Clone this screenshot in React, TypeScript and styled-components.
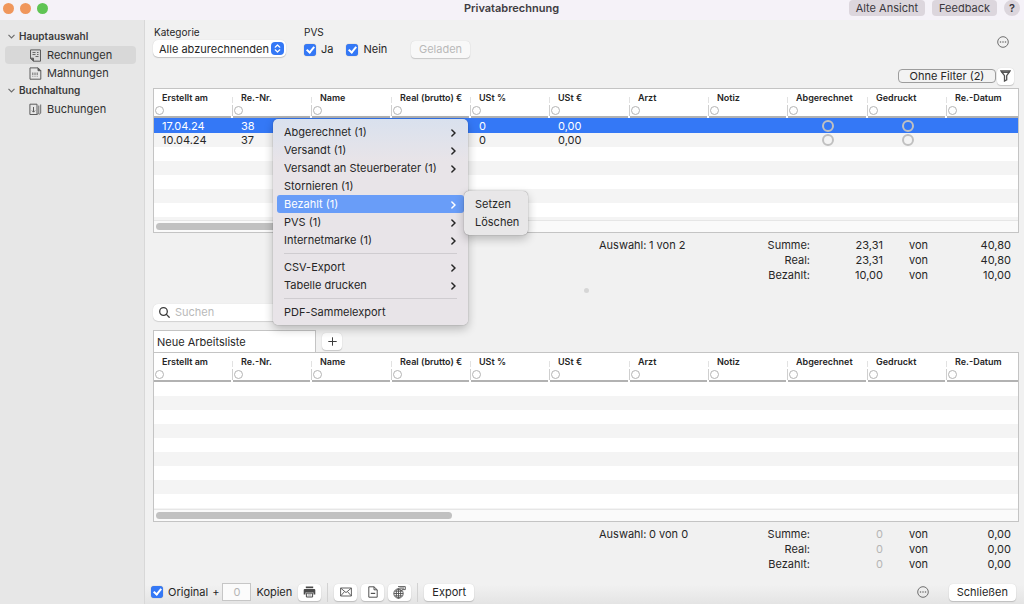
import React from "react";
import styled, { createGlobalStyle, css } from "styled-components";

const GlobalStyle = createGlobalStyle`
  *, *::before, *::after { box-sizing: border-box; }
  body {
    margin: 0;
    font-family: Inter, "Liberation Sans", sans-serif;
    font-size: 11px;
    line-height: 15px;
    color: #262626;
    background: #f1f1f1;
  }
  button, input, select { font: inherit; color: inherit; }
`;

const Window = styled.div`
  position: relative;
  display: flex;
  flex-direction: column;
  min-height: 100vh;
`;

/* ---------- title bar ---------- */

const TitleBar = styled.header`
  display: grid;
  grid-template-columns: 1fr auto 1fr;
  align-items: start;
  height: 20px;
  padding: 0 4px 0 3px;
  background: #f5f2f8;
`;

const Lights = styled.div`
  display: flex;
  gap: 6px;
  padding-top: 3px;
`;

const Light = styled.span<{ $color: string }>`
  width: 11px;
  height: 11px;
  border-radius: 50%;
  background: ${(p) => p.$color};
`;

const Title = styled.h1`
  margin: 0;
  font-size: 11px;
  line-height: 16px;
  font-weight: 600;
  color: #3f3c42;
`;

const TitleActions = styled.div`
  display: flex;
  justify-content: flex-end;
  gap: 7px;
`;

const TitleButton = styled.button<{ $round?: boolean }>`
  height: 16px;
  padding: 0 7px;
  border: 0;
  border-radius: 4px;
  background: #dcd6dd;
  line-height: 16px;
  color: #3b383d;
  ${(p) =>
    p.$round &&
    css`
      width: 16px;
      padding: 0;
      border-radius: 50%;
      font-weight: 600;
    `}
`;

const Body = styled.div`
  display: flex;
  flex: 1;
`;

/* ---------- sidebar ---------- */

const Sidebar = styled.nav`
  flex: 0 0 145px;
  padding: 8px 8px 0 5px;
  border-right: 1px solid #d8d8d8;
  background: #e7e7e7;
`;

const GroupTitle = styled.h2`
  display: flex;
  align-items: center;
  gap: 4px;
  height: 18px;
  margin: 0;
  padding: 0 0 2px 3px;
  font-size: 10px;
  font-weight: 600;
  color: #3a3a3a;
`;

const GroupList = styled.ul`
  margin: 0;
  padding: 0;
  list-style: none;
`;

const SideLink = styled.a<{ $active?: boolean }>`
  display: flex;
  align-items: center;
  gap: 5px;
  height: 18px;
  padding-left: 24px;
  border-radius: 4px;
  background: ${(p) => (p.$active ? "#d8d8d8" : "transparent")};
  color: #303030;
  text-decoration: none;
`;

/* ---------- main area ---------- */

const Main = styled.main`
  display: flex;
  flex: 1;
  flex-direction: column;
  min-width: 0;
`;

const Content = styled.div`
  display: flex;
  flex: 1;
  flex-direction: column;
  padding: 5px 5px 0 8px;
`;

const Toolbar = styled.div`
  display: flex;
  align-items: flex-start;
  height: 44px;
`;

const Field = styled.div`
  display: flex;
  flex-direction: column;
  margin-right: 18px;
`;

const FieldLabel = styled.label`
  padding-left: 1px;
  font-size: 10px;
  line-height: 15px;
`;

const SelectWrap = styled.div`
  position: relative;
  width: 133px;
  height: 17px;
`;

const Select = styled.select`
  appearance: none;
  width: 100%;
  height: 17px;
  padding: 0 14px 0 6px;
  border: 0;
  border-radius: 5px;
  background: #fff;
  box-shadow: 0 1px 1px rgba(0, 0, 0, 0.18), 0 0 1px rgba(0, 0, 0, 0.15);
  line-height: 16px;
`;

const SelectKnob = styled.span`
  position: absolute;
  top: 2px;
  right: 2px;
  display: flex;
  align-items: center;
  justify-content: center;
  width: 13px;
  height: 13px;
  border-radius: 4px;
  background: #3478f6;
  pointer-events: none;
`;

const CheckRow = styled.fieldset`
  display: flex;
  flex-wrap: wrap;
  gap: 3px 13px;
  width: 96px;
  margin: 0;
  padding: 0;
  border: 0;
`;

const CheckLegend = styled.legend`
  padding: 0 0 2px;
  font-size: 10px;
  line-height: 15px;
`;

const CheckLabel = styled.label`
  display: flex;
  align-items: center;
  gap: 5px;
`;

const Check = styled.input`
  appearance: none;
  display: flex;
  align-items: center;
  justify-content: center;
  flex: none;
  width: 12px;
  height: 12px;
  margin: 0;
  border-radius: 3px;
  background: #fff;
  box-shadow: 0 0 1px rgba(0, 0, 0, 0.4);
  &:checked { background: #3478f6; }
  &:checked::after {
    content: "";
    width: 5px;
    height: 8px;
    margin-bottom: 2px;
    border: solid #fff;
    border-width: 0 2px 2px 0;
    transform: rotate(40deg);
  }
`;

const PushButton = styled.button`
  display: flex;
  align-items: center;
  justify-content: center;
  height: 17px;
  min-width: 23px;
  padding: 0 8px;
  border: 0;
  border-radius: 4px;
  background: #fff;
  box-shadow: 0 1px 1px rgba(0, 0, 0, 0.16), 0 0 1px rgba(0, 0, 0, 0.16);
  line-height: 17px;
  &:disabled { background: #f8f8f8; color: #b9b9b9; }
`;

const IconPush = styled(PushButton)<{ $w?: number }>`
  width: ${(p) => p.$w ?? 23}px;
  min-width: 0;
  padding: 0;
`;

const LoadedSlot = styled.div`
  padding: 16px 0 0 11px;
`;

const MoreButton = styled.button<{ $top?: boolean }>`
  display: flex;
  margin: ${(p) => (p.$top ? "11px 10px 0 auto" : "0 20px 0 auto")};
  padding: 0;
  border: 0;
  background: none;
`;

const FilterBar = styled.div`
  display: flex;
  align-items: center;
  justify-content: flex-end;
  gap: 1px;
  height: 20px;
  padding: 0 5px 4px 0;
  margin-top: -1px;
`;

const FilterButton = styled.button`
  width: 98px;
  height: 14px;
  padding: 0;
  border: 1px solid #9d9d9d;
  border-radius: 4px;
  background: #f3f3f3;
  line-height: 12px;
`;

/* ---------- tables ---------- */

const TableFrame = styled.section<{ $grow?: boolean }>`
  display: flex;
  flex-direction: column;
  flex: ${(p) => (p.$grow ? "1 0 auto" : "none")};
  border: 1px solid #c4c4c4;
  background: #fff;
`;

const Grid = styled.table`
  width: 100%;
  table-layout: fixed;
  border-collapse: collapse;
`;

const HeadCell = styled.th`
  height: 29px;
  padding: 0;
  text-align: left;
  vertical-align: top;
`;

const HeadInner = styled.div<{ $last: boolean }>`
  display: flex;
  flex-direction: column;
  height: 29px;
  background: linear-gradient(#b2b2b2, #b2b2b2) left bottom /
    ${(p) => (p.$last ? "100%" : "calc(100% - 2px)")} 2px no-repeat;
`;

const HeadTitle = styled.span<{ $last: boolean }>`
  height: 16px;
  padding: 2px 0 0 8px;
  font-size: 9px;
  line-height: 14px;
  font-weight: 600;
  white-space: nowrap;
  color: #262626;
  background: ${(p) =>
    p.$last ? "none" : "linear-gradient(#e2e2e2, #e2e2e2) right 8px / 1px 6px no-repeat"};
`;

const HeadFilter = styled.span<{ $last: boolean }>`
  display: flex;
  align-items: center;
  height: 11px;
  border-right: 1px solid ${(p) => (p.$last ? "transparent" : "#cfcfcf")};
`;

const FilterDot = styled.button`
  width: 9px;
  height: 9px;
  margin-left: 1px;
  padding: 0;
  border: 1px solid #b4b4b4;
  border-radius: 50%;
  background: #fff;
`;

const Row = styled.tr<{ $selected?: boolean }>`
  height: ${(p) => (p.$selected ? 15 : 14)}px;
  background: ${(p) => (p.$selected ? "#3478f6" : "#f4f4f4")};
  color: ${(p) => (p.$selected ? "#fff" : "#262626")};
`;

const Cell = styled.td<{ $center?: boolean }>`
  padding: 0 0 0 8px;
  line-height: 14px;
  ${(p) =>
    p.$center &&
    css`
      padding: 0;
    `}
`;

const StateDot = styled.input`
  appearance: none;
  display: block;
  width: 12px;
  height: 12px;
  margin: 0 auto;
  border: 2px solid #c0c0c0;
  border-radius: 50%;
`;

const Stripes = styled.div<{ $grow?: boolean }>`
  flex: ${(p) => (p.$grow ? "1 0 112px" : "0 0 73px")};
  background: repeating-linear-gradient(#fff 0 14px, #f4f4f4 14px 28px);
`;

const ScrollTrack = styled.div`
  height: 12px;
  padding: 2px;
  border-top: 1px solid #e6e6e6;
  background: #fafafa;
`;

const ScrollThumb = styled.div`
  width: 34%;
  min-width: 296px;
  height: 7px;
  border-radius: 4px;
  background: #c1c1c1;
`;

const Sums = styled.div`
  display: grid;
  grid-template-columns: 50px 61px 100px 73px 45px 83px;
  grid-auto-rows: 15px;
  justify-content: end;
  padding: 5px 8px 0 0;
`;

const Sum = styled.span<{ $col: number; $muted?: boolean }>`
  grid-column: ${(p) => p.$col};
  text-align: right;
  color: ${(p) => (p.$muted ? "#b5b5b5" : "inherit")};
`;

const SumStart = styled(Sum)`
  text-align: left;
  white-space: nowrap;
`;

const Splitter = styled.div`
  display: flex;
  justify-content: center;
  padding: 5px 0 11px;
`;

const SplitDot = styled.span`
  width: 5px;
  height: 5px;
  border-radius: 50%;
  background: #d6d6d6;
`;

const SearchBox = styled.label`
  display: flex;
  align-items: center;
  gap: 5px;
  width: 250px;
  height: 17px;
  padding-left: 6px;
  border-radius: 5px;
  background: #fff;
  box-shadow: 0 1px 1px rgba(0, 0, 0, 0.12), 0 0 1px rgba(0, 0, 0, 0.15);
`;

const SearchInput = styled.input`
  flex: 1;
  min-width: 0;
  height: 15px;
  padding: 0;
  border: 0;
  outline: 0;
  background: none;
  &::placeholder { color: #b9b9b9; opacity: 1; }
`;

const Tabs = styled.div`
  display: flex;
  align-items: center;
  gap: 6px;
  margin-top: 9px;
`;

const Tab = styled.button`
  width: 163px;
  height: 22px;
  padding: 2px 0 0 3px;
  border: 1px solid #c4c4c4;
  border-bottom: 0;
  background: #fff;
  text-align: left;
`;

/* ---------- bottom bar ---------- */

const BottomBar = styled.footer`
  display: flex;
  align-items: center;
  height: 32px;
  padding: 8px 8px 0 6px;
  background: linear-gradient(#f1f1f1 40%, #e4e4e4);
`;

const Copies = styled.input`
  width: 29px;
  height: 18px;
  margin: 0 5px 0 3px;
  padding: 0;
  border: 1px solid #c6c6c6;
  background: #fbfbfb;
  text-align: center;
  color: #b5b5b5;
`;

const Plus = styled.span`
  margin-left: 4px;
`;

const ButtonGroup = styled.div`
  display: flex;
  gap: 4px;
  margin-left: 6px;
`;

const Divider = styled.span`
  width: 1px;
  height: 19px;
  margin-left: 6px;
  background: #d2d2d2;
`;

/* ---------- context menu ---------- */

const MenuPanel = styled.ul<{ $sub?: boolean }>`
  position: absolute;
  top: ${(p) => (p.$sub ? 191 : 119)}px;
  left: ${(p) => (p.$sub ? 464 : 273)}px;
  width: ${(p) => (p.$sub ? 64 : 195)}px;
  margin: 0;
  padding: 4px;
  border-radius: 5px;
  list-style: none;
  background: ${(p) => (p.$sub ? "#e8e7e8" : "linear-gradient(#d9e1ee, #e3e3ea 28px, #e8e4e8 42px)")};
  box-shadow: 0 0 1px rgba(0, 0, 0, 0.5), 0 4px 10px rgba(0, 0, 0, 0.24);
`;

const MenuButton = styled.button<{ $active?: boolean }>`
  display: flex;
  align-items: center;
  justify-content: space-between;
  width: 100%;
  height: 18px;
  padding: 1px 8px 0 7px;
  border: 0;
  border-radius: 3px;
  background: ${(p) => (p.$active ? "#699df8" : "transparent")};
  color: ${(p) => (p.$active ? "#fff" : "#262626")};
  white-space: nowrap;
`;

const MenuRule = styled.li`
  height: 1px;
  margin: 4px 7px;
  background: #cfccd0;
`;

/* ---------- icons ---------- */

const ChevronDown = () => (
  <svg width="7" height="5" viewBox="0 0 7 5" fill="none" stroke="#6b6b6b" strokeWidth="1.1">
    <path d="M.5 .8 3.5 4 6.500 .8" />
  </svg>
);

const ChevronRight = () => (
  <svg width="5" height="8" viewBox="0 0 5 8" fill="none" stroke="currentColor" strokeWidth="1.5" strokeLinecap="round" strokeLinejoin="round">
    <path d="M.9 1 4 4 .9 7" />
  </svg>
);

const InvoiceIcon = () => (
  <svg width="13" height="13" viewBox="0 0 13 13" fill="none" stroke="#5c5c5c">
    <path d="M1.500 9V.9H11.500V12.200H4.500" />
    <path d="M4.500 12.200 1.200 9.200H4.500Z" fill="#5c5c5c" />
    <path d="M3.500 3.500H6.500M8 3.500H9.500M3.500 5.500H6.500M8 5.500H9.500M6.500 7.500H9.500" strokeWidth=".9" />
  </svg>
);

const ReminderIcon = () => (
  <svg width="13" height="13" viewBox="0 0 13 13" fill="none" stroke="#5c5c5c">
    <path d="M1 .9H9L11.800 3.700V12.200H1Z" />
    <path d="M9 .9V3.700H11.800Z" fill="#5c5c5c" />
    <path d="M3.800 5.500V8M6 5.500V8M8.200 5.500V8M3.800 8.800V9.600M6 8.800V9.600M8.200 8.800V9.600" strokeWidth=".9" />
  </svg>
);

const BookingIcon = () => (
  <svg width="13" height="13" viewBox="0 0 13 13" fill="none" stroke="#5c5c5c">
    <path d="M.9 1.200H8V11.500H.9Z" />
    <path d="M8 11.500 9.800 10.200V2.500M9.800 11.500 11.700 10.200V1.500" strokeWidth=".9" />
    <path d="M4.500 4V9M3 7.600 4.500 9.200 6 7.600" />
  </svg>
);

const MoreIcon = () => (
  <svg width="12" height="12" viewBox="0 0 12 12" fill="none" stroke="#6e6e6e">
    <circle cx="6" cy="6" r="5.300" />
    <g fill="#6e6e6e" stroke="none">
      <circle cx="3.500" cy="6" r=".8" />
      <circle cx="6" cy="6" r=".8" />
      <circle cx="8.500" cy="6" r=".8" />
    </g>
  </svg>
);

const FunnelIcon = () => (
  <svg width="11" height="12" viewBox="0 0 11 12" fill="none" stroke="#505050" strokeWidth="1.300">
    <path d="M1 1H10L6.700 5.600V9.800L4.500 11V5.600Z" />
    <path d="M1.500 2.300H9.500" />
  </svg>
);

const SearchIcon = () => (
  <svg width="11" height="11" viewBox="0 0 11 11" fill="none" stroke="#3c3c3c" strokeWidth="1.300" strokeLinecap="round">
    <circle cx="4.500" cy="4.500" r="3.800" />
    <path d="M7.400 7.400 10.200 10.200" />
  </svg>
);

const PlusIcon = () => (
  <svg width="9" height="9" viewBox="0 0 9 9" stroke="#3c3c3c">
    <path d="M4.500 .3V8.700M.3 4.500H8.700" />
  </svg>
);

const UpDownIcon = () => (
  <svg width="7" height="9" viewBox="0 0 7 9" fill="none" stroke="#fff" strokeWidth="1.200" strokeLinecap="round" strokeLinejoin="round">
    <path d="M1.200 3.200 3.500 1 5.800 3.200M1.200 5.800 3.500 8 5.800 5.800" />
  </svg>
);

const PrinterIcon = () => (
  <svg width="13" height="12" viewBox="0 0 13 12">
    <path d="M2.800 .5H10.200V2.200H2.800Z" fill="#4a4a4a" />
    <path d="M1.800 3H11.200Q12.300 3 12.300 4.100V8.600H10.500V6.500H2.500V8.600H.7V4.100Q.7 3 1.800 3Z" fill="#4a4a4a" />
    <path d="M3.400 7.200H9.600V11H3.400Z" fill="none" stroke="#4a4a4a" />
    <path d="M4.600 8.600H8.400M4.600 9.800H8.400" stroke="#8a8a8a" strokeWidth=".6" />
  </svg>
);

const MailIcon = () => (
  <svg width="12" height="10" viewBox="0 0 12 10" fill="none" stroke="#505050">
    <path d="M.6 1H11.400V9H.6ZM.8 1.200 6 5.600 11.200 1.200M.8 8.800 4.500 4.600M11.200 8.800 7.500 4.600" strokeWidth=".9" />
  </svg>
);

const FileIcon = () => (
  <svg width="10" height="12" viewBox="0 0 10 12" fill="none" stroke="#505050">
    <path d="M.8 .8H6L9.200 3.800V11.200H.8Z" />
    <path d="M6 .8V3.800H9.200" />
    <path d="M2.800 7.400H7.200" strokeWidth="1.200" />
  </svg>
);

const GlobeIcon = () => (
  <svg width="13" height="13" viewBox="0 0 13 13" fill="none" stroke="#505050" strokeWidth=".9">
    <circle cx="5.500" cy="7.500" r="4.700" />
    <ellipse cx="5.500" cy="7.500" rx="2.200" ry="4.700" />
    <path d="M.8 7.500H10.200M1.500 5.200H9.500M1.500 9.800H9.500M5.500 2.800V12.200" />
    <path d="M5 .6H12.300V3.600H9.200L8 5V3.600" fill="#f6f6f6" />
    <path d="M6.500 2.100H11" />
  </svg>
);

/* ---------- data ---------- */

type Column = { title: string; width?: number };

const columns: Column[] = [
  { title: "Erstellt am", width: 79 },
  { title: "Re.-Nr.", width: 79 },
  { title: "Name", width: 80 },
  { title: "Real (brutto) €", width: 79 },
  { title: "USt %", width: 79 },
  { title: "USt €", width: 80 },
  { title: "Arzt", width: 79 },
  { title: "Notiz", width: 79 },
  { title: "Abgerechnet", width: 80 },
  { title: "Gedruckt", width: 79 },
  { title: "Re.-Datum" },
];

type Invoice = { date: string; no: string; selected?: boolean };

const invoices: Invoice[] = [
  { date: "17.04.24", no: "38", selected: true },
  { date: "10.04.24", no: "37" },
];

type SumRow = { label: string; part: string; total: string };

const topSums: SumRow[] = [
  { label: "Summe:", part: "23,31", total: "40,80" },
  { label: "Real:", part: "23,31", total: "40,80" },
  { label: "Bezahlt:", part: "10,00", total: "10,00" },
];

const listSums: SumRow[] = [
  { label: "Summe:", part: "0", total: "0,00" },
  { label: "Real:", part: "0", total: "0,00" },
  { label: "Bezahlt:", part: "0", total: "0,00" },
];

type MenuEntry = { label: string; sub?: boolean; active?: boolean } | null;

const menu: MenuEntry[] = [
  { label: "Abgerechnet (1)", sub: true },
  { label: "Versandt (1)", sub: true },
  { label: "Versandt an Steuerberater (1)", sub: true },
  { label: "Stornieren (1)" },
  { label: "Bezahlt (1)", sub: true, active: true },
  { label: "PVS (1)", sub: true },
  { label: "Internetmarke (1)", sub: true },
  null,
  { label: "CSV-Export", sub: true },
  { label: "Tabelle drucken", sub: true },
  null,
  { label: "PDF-Sammelexport" },
];

/* ---------- composed parts ---------- */

function InvoiceTable({ rows, grow }: { rows: Invoice[]; grow?: boolean }) {
  return (
    <TableFrame $grow={grow}>
      <Grid>
        <colgroup>
          {columns.map((c) => (
            <col key={c.title} width={c.width} />
          ))}
        </colgroup>
        <thead>
          <tr>
            {columns.map((c, i) => {
              const last = i === columns.length - 1;
              return (
                <HeadCell key={c.title} scope="col">
                  <HeadInner $last={last}>
                    <HeadTitle $last={last}>{c.title}</HeadTitle>
                    <HeadFilter $last={last}>
                      <FilterDot type="button" aria-label={`${c.title} filtern`} />
                    </HeadFilter>
                  </HeadInner>
                </HeadCell>
              );
            })}
          </tr>
        </thead>
        <tbody>
          {rows.map((r) => (
            <Row key={r.no} $selected={r.selected}>
              <Cell>{r.date}</Cell>
              <Cell>{r.no}</Cell>
              <Cell />
              <Cell />
              <Cell>0</Cell>
              <Cell>0,00</Cell>
              <Cell />
              <Cell />
              <Cell $center>
                <StateDot type="checkbox" aria-label="Abgerechnet" />
              </Cell>
              <Cell $center>
                <StateDot type="checkbox" aria-label="Gedruckt" />
              </Cell>
              <Cell />
            </Row>
          ))}
        </tbody>
      </Grid>
      <Stripes $grow={grow} />
      <ScrollTrack>
        <ScrollThumb />
      </ScrollTrack>
    </TableFrame>
  );
}

function SumBlock({ selection, rows, muted }: { selection: string; rows: SumRow[]; muted?: boolean }) {
  return (
    <Sums>
      <SumStart $col={1}>Auswahl:</SumStart>
      <SumStart $col={2}>{selection}</SumStart>
      {rows.map((r) => (
        <React.Fragment key={r.label}>
          <Sum $col={3}>{r.label}</Sum>
          <Sum $col={4} $muted={muted}>{r.part}</Sum>
          <Sum $col={5}>von</Sum>
          <Sum $col={6}>{r.total}</Sum>
        </React.Fragment>
      ))}
    </Sums>
  );
}

export default function App() {
  return (
    <Window>
      <GlobalStyle />
      <TitleBar>
        <Lights>
          <Light $color="#f0965c" />
          <Light $color="#f0965c" />
          <Light $color="#60c454" />
        </Lights>
        <Title>Privatabrechnung</Title>
        <TitleActions>
          <TitleButton>Alte Ansicht</TitleButton>
          <TitleButton>Feedback</TitleButton>
          <TitleButton $round>?</TitleButton>
        </TitleActions>
      </TitleBar>
      <Body>
        <Sidebar>
          <GroupTitle><ChevronDown />Hauptauswahl</GroupTitle>
          <GroupList>
            <li><SideLink href="#rechnungen" $active><InvoiceIcon />Rechnungen</SideLink></li>
            <li><SideLink href="#mahnungen"><ReminderIcon />Mahnungen</SideLink></li>
          </GroupList>
          <GroupTitle><ChevronDown />Buchhaltung</GroupTitle>
          <GroupList>
            <li><SideLink href="#buchungen"><BookingIcon />Buchungen</SideLink></li>
          </GroupList>
        </Sidebar>
        <Main>
          <Content>
            <Toolbar>
              <Field>
                <FieldLabel htmlFor="kategorie">Kategorie</FieldLabel>
                <SelectWrap>
                  <Select id="kategorie" defaultValue="alle">
                    <option value="alle">Alle abzurechnenden</option>
                  </Select>
                  <SelectKnob><UpDownIcon /></SelectKnob>
                </SelectWrap>
              </Field>
              <CheckRow>
                <CheckLegend>PVS</CheckLegend>
                <CheckLabel><Check type="checkbox" defaultChecked />Ja</CheckLabel>
                <CheckLabel><Check type="checkbox" defaultChecked />Nein</CheckLabel>
              </CheckRow>
              <LoadedSlot>
                <PushButton disabled>Geladen</PushButton>
              </LoadedSlot>
              <MoreButton $top aria-label="Mehr"><MoreIcon /></MoreButton>
            </Toolbar>
            <FilterBar>
              <FilterButton>Ohne Filter (2)</FilterButton>
              <IconPush $w={17} aria-label="Filter"><FunnelIcon /></IconPush>
            </FilterBar>
            <InvoiceTable rows={invoices} />
            <SumBlock selection="1 von 2" rows={topSums} />
            <Splitter><SplitDot /></Splitter>
            <SearchBox>
              <SearchIcon />
              <SearchInput type="text" placeholder="Suchen" aria-label="Suchen" />
            </SearchBox>
            <Tabs>
              <Tab>Neue Arbeitsliste</Tab>
              <IconPush $w={20} aria-label="Neue Liste"><PlusIcon /></IconPush>
            </Tabs>
            <InvoiceTable rows={[]} grow />
            <SumBlock selection="0 von 0" rows={listSums} muted />
          </Content>
          <BottomBar>
            <CheckLabel><Check type="checkbox" defaultChecked />Original</CheckLabel>
            <Plus>+</Plus>
            <Copies id="kopien" type="text" defaultValue="0" />
            <label htmlFor="kopien">Kopien</label>
            <ButtonGroup>
              <IconPush aria-label="Drucken"><PrinterIcon /></IconPush>
            </ButtonGroup>
            <Divider />
            <ButtonGroup>
              <IconPush aria-label="E-Mail"><MailIcon /></IconPush>
              <IconPush aria-label="Dokument"><FileIcon /></IconPush>
              <IconPush aria-label="Online"><GlobeIcon /></IconPush>
            </ButtonGroup>
            <Divider />
            <ButtonGroup>
              <PushButton>Export</PushButton>
            </ButtonGroup>
            <MoreButton aria-label="Mehr"><MoreIcon /></MoreButton>
            <PushButton>Schließen</PushButton>
          </BottomBar>
        </Main>
      </Body>
      <MenuPanel>
        {menu.map((m, i) =>
          m ? (
            <li key={m.label}>
              <MenuButton $active={m.active}>
                {m.label}
                {m.sub && <ChevronRight />}
              </MenuButton>
            </li>
          ) : (
            <MenuRule key={i} />
          )
        )}
      </MenuPanel>
      <MenuPanel $sub>
        <li><MenuButton>Setzen</MenuButton></li>
        <li><MenuButton>Löschen</MenuButton></li>
      </MenuPanel>
    </Window>
  );
}
